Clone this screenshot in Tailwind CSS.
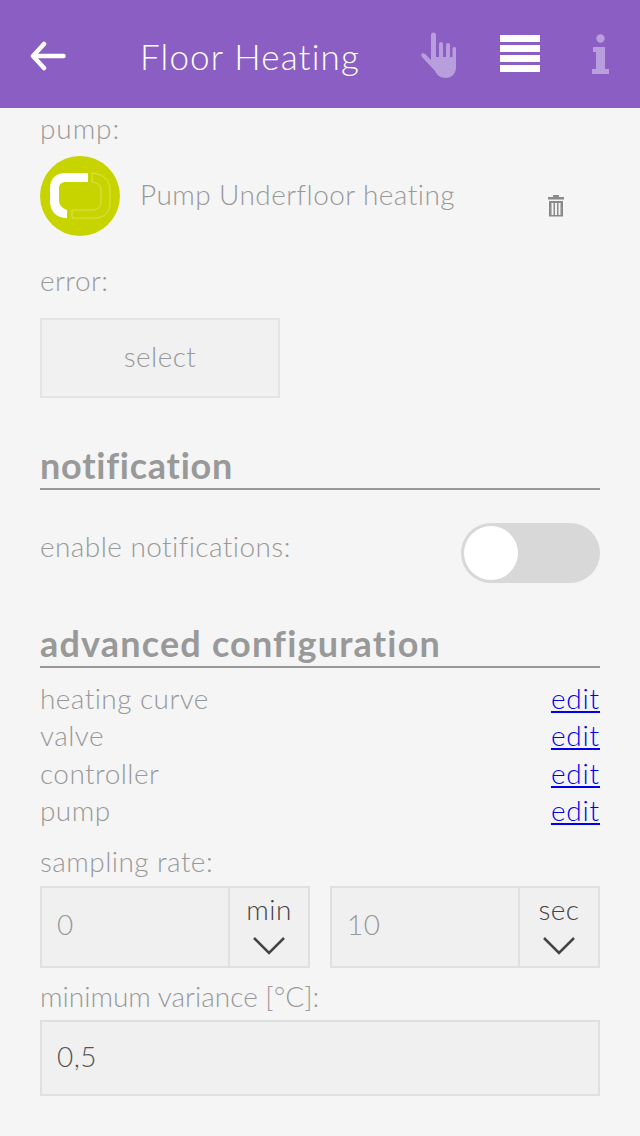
<!DOCTYPE html>
<html lang="en">
<head>
    <meta charset="UTF-8">
    <meta name="viewport" content="width=device-width, initial-scale=1.0">
    <title>Floor Heating</title>
    <script src="https://cdn.jsdelivr.net/npm/@tailwindcss/browser@4"></script>
</head>
<body class="bg-[#f5f5f5] font-['Lato',sans-serif] text-[#999] text-[28px] font-light leading-[36px] tracking-[0.43px] w-[640px] h-[1136px] overflow-hidden">
    <!-- Header -->
    <header class="h-[108px] bg-[#8a5ec2] flex items-center relative text-white">
        <svg class="absolute left-[30px] top-[41px]" width="36" height="30" viewBox="0 0 36 30" fill="none" stroke="white" stroke-width="4.5" stroke-linecap="round" stroke-linejoin="round"><path d="M33.5 15H3M14 3 3 15l11 12"/></svg>
        <h1 class="absolute left-[140px] top-[35px] text-[35px] leading-[42px] font-light tracking-[1.15px]">Floor Heating</h1>
        <svg class="absolute left-[420px] top-[31px]" width="38" height="48" viewBox="0 0 38 48" fill="#b89edd"><path d="M11 4a2.500 2.500 0 0 1 5 0v22h3V13a2 2 0 0 1 4 0v13h3V14a2 2 0 0 1 4 0v12h2.500V17a2 2 0 0 1 3.500 0v19c0 7-5 11-10 11-6 0-9-3-11-7L2 26c-1-1.500-1-3 0-3.500 1-.7 2.500-.2 3.500.8l5.500 6z"/></svg>
        <div class="absolute left-[500px] top-[35px] w-[40px] flex flex-col gap-[3px]">
            <div class="h-[7px] bg-white"></div>
            <div class="h-[7px] bg-white"></div>
            <div class="h-[7px] bg-white"></div>
            <div class="h-[7px] bg-white"></div>
        </div>
        <svg class="absolute left-[592px] top-[34px]" width="18" height="41" viewBox="0 0 18 41" fill="#b89edd"><circle cx="8.500" cy="4.500" r="4.200"/><path d="M1 13h12v22h4v5H0v-5h4V18H1z"/></svg>
    </header>

    <main class="px-[40px]">
        <p class="mt-[2px] tracking-[0.9px]">pump:</p>
        <div class="flex items-start mt-[10px] h-[80px]">
            <svg width="80" height="80" viewBox="0 0 80 80" class="shrink-0">
                <circle cx="40" cy="40" r="40" fill="#c8d400"/>
                <path d="M48 17H26C15 17 10 23 10 33v12c0 10 6 17 17 17v-8c-5-2-8-5-8-10V33c0-5 2-7 8-7h21z" fill="white"/>
                <path d="M52 17c11 1 18 7 18 17v13c0 10-6 15-16 15H32v-8h20c6 0 9-3 9-8V34c0-5-3-7-9-8z" fill="none" stroke="#e2ea70" stroke-width="0.7"/>
            </svg>
            <span class="ml-[20px] mt-[20px]">Pump Underfloor heating</span>
            <svg class="ml-auto mr-[34px] mt-[38px]" width="20" height="24" viewBox="0 0 20 24" fill="#8a8a8a"><path d="M7 1h6v2h5v2.500H2V3h5zM3 7h14v15.500H3zm2.500 2v12h2V9zm3.500 0v12h2V9zm3.500 0v12h2V9z" fill-rule="evenodd"/></svg>
        </div>
        <p class="mt-[26px]">error:</p>
        <button class="block mt-[20px] w-[240px] h-[80px] pb-[4px] bg-[#f1f1f1] border-2 border-[#e4e4e4] text-[#999] font-light">select</button>

        <h2 class="mt-[48px] h-[44px] border-b-2 border-[#999] text-[36px] leading-[38px] font-bold tracking-[0.75px]">notification</h2>
        <div class="flex items-start justify-between mt-[33px] h-[62px]">
            <span class="mt-[5px]">enable notifications:</span>
            <div class="w-[139px] h-[60px] rounded-full bg-[#d8d8d8] p-[3px]">
                <div class="w-[54px] h-[54px] rounded-full bg-white"></div>
            </div>
        </div>

        <h2 class="mt-[38px] h-[45px] border-b-2 border-[#999] text-[36px] leading-[40px] font-bold tracking-[1.18px]">advanced configuration</h2>
        <div class="mt-[13px] flex flex-col">
            <div class="flex justify-between h-[37.500px] items-center pb-[4px]"><span>heating curve</span><a href="#" class="text-[#0000ee] underline tracking-[0.8px]">edit</a></div>
            <div class="flex justify-between h-[37.500px] items-center pb-[4px]"><span>valve</span><a href="#" class="text-[#0000ee] underline tracking-[0.8px]">edit</a></div>
            <div class="flex justify-between h-[37.500px] items-center pb-[4px]"><span>controller</span><a href="#" class="text-[#0000ee] underline tracking-[0.8px]">edit</a></div>
            <div class="flex justify-between h-[37.500px] items-center pb-[4px]"><span>pump</span><a href="#" class="text-[#0000ee] underline tracking-[0.8px]">edit</a></div>
        </div>
        <p class="mt-[12px]">sampling rate:</p>
        <div class="flex gap-[20px] mt-[7px]">
            <div class="flex w-[270px] h-[82px] bg-[#f0f0f0] border-2 border-[#e0e0e0]">
                <div class="flex-1 flex items-center pl-[15px] pb-[6px]">0</div>
                <div class="w-[80px] border-l-2 border-[#e0e0e0] flex flex-col items-center text-[#444]">
                    <span class="mt-[3px]">min</span>
                    <svg class="mt-[9px]" width="32" height="20" viewBox="0 0 32 20" fill="none" stroke="#444" stroke-width="2.500"><path d="M1 2l15 15L31 2"/></svg>
                </div>
            </div>
            <div class="flex w-[270px] h-[82px] bg-[#f0f0f0] border-2 border-[#e0e0e0]">
                <div class="flex-1 flex items-center pl-[15px] pb-[6px]">10</div>
                <div class="w-[80px] border-l-2 border-[#e0e0e0] flex flex-col items-center text-[#444]">
                    <span class="mt-[3px]">sec</span>
                    <svg class="mt-[9px]" width="32" height="20" viewBox="0 0 32 20" fill="none" stroke="#444" stroke-width="2.500"><path d="M1 2l15 15L31 2"/></svg>
                </div>
            </div>
        </div>
        <p class="mt-[10px] tracking-[0px]">minimum variance [°C]:</p>
        <div class="mt-[6px] h-[76px] pb-[5px] bg-[#f0f0f0] border-2 border-[#e0e0e0] flex items-center pl-[15px] text-[#555]">0,5</div>
    </main>
</body>
</html>
